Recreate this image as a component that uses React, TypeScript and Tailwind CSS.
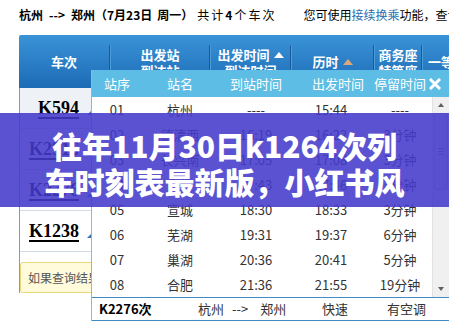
const trains = ["K594", "K2916", "K2276", "K1238"];

const stops = [
  ["01", "杭州", "----", "15:44", "----"],
  ["02", "德清西", "16:19", "16:22", "3分钟"],
  ["03", "长兴南", "17:05", "17:08", "3分钟"],
  ["04", "广德", "17:43", "17:46", "3分钟"],
  ["05", "宣城", "18:30", "18:33", "3分钟"],
  ["06", "芜湖", "19:31", "19:37", "6分钟"],
  ["07", "巢湖", "20:36", "20:41", "5分钟"],
  ["08", "合肥", "21:36", "21:55", "19分钟"],
];

function Divider() {
  return <div className="h-[34px] w-[2px] shrink-0 border-l border-r border-l-[#1a5a97] border-r-[#4d9bd8]" />;
}

function SortArrow({ tone }: { tone: string }) {
  return <span className={`ml-[4px] inline-block h-0 w-0 border-x-[5px] border-b-[6px] border-x-transparent ${tone}`} />;
}

export default function App() {
  return (
    <div className="relative h-[325px] w-[449px] overflow-hidden bg-white font-['Noto_Sans_CJK_SC','Liberation_Sans',sans-serif] text-[#333]">
      {/* route summary */}
      <div className="flex h-[30px] items-center whitespace-nowrap pl-[19px] text-[12px] text-black">
        <span className="font-bold">
          杭州<span className="mx-[6px]">--&gt;</span>郑州（7月23日<span className="ml-[5px]">周一</span>）
        </span>
        <span className="ml-[4px] tracking-[2px]">
          共计<b>4</b>个车次
        </span>
        <span className="ml-[27px]">
          您可使用<span className="text-[#1f6fb2]">接续换乘</span>功能，查询途中换乘一次的部分列车余票情况。
        </span>
      </div>

      {/* result table header */}
      <div className="ml-[19px] mt-[5px] flex h-[53px] w-[480px] items-center rounded-t-[2px] bg-gradient-to-b from-[#3a93d7] to-[#1c6bb5] text-[13px] font-bold leading-[16px] text-white">
        <div className="flex w-[90px] justify-center">车次</div>
        <Divider />
        <div className="flex w-[98px] flex-col items-center pt-[3px]">
          <span>出发站</span>
          <span>到达站</span>
        </div>
        <Divider />
        <div className="flex w-[79px] flex-col items-center pt-[3px]">
          <span className="flex items-center">
            出发时间
            <SortArrow tone="border-b-white" />
          </span>
          <span>到达时间</span>
        </div>
        <Divider />
        <div className="flex w-[81px] items-center justify-center">
          历时
          <SortArrow tone="border-b-[#d9a77a]" />
        </div>
        <Divider />
        <div className="flex w-[46px] flex-col items-center pt-[3px]">
          <span>商务座</span>
          <span>特等座</span>
        </div>
        <Divider />
        <div className="pl-[5px]">一等座</div>
      </div>

      {/* train number column */}
      <div className="ml-[19px] w-[91px] border-l border-[#7b9cbd]">
        {trains.map((t, i) => (
          <div
            key={t}
            className={`flex h-[41px] items-center justify-end border-b border-[#d3dce6] pr-[19px] ${i === 0 ? "bg-[#eef2f7]" : ""}`}
          >
            <span className="font-['Liberation_Serif',serif] text-[18px] font-bold text-black underline decoration-2 underline-offset-[3px]">
              {t}
            </span>
            <span className="ml-[8px] mt-[10px] h-0 w-0 border-b-[4px] border-l-[4px] border-b-[#3a6fb0] border-l-transparent" />
          </div>
        ))}
        <div className="pt-[10px]">
          <div className="flex h-[31px] items-center whitespace-nowrap rounded-[3px] border border-[#ecd77a] bg-[#fffbdb] pl-[7px] text-[12px] text-[#555]">
            如果查询结果中没有满足条件的车次
          </div>
        </div>
      </div>

      {/* stop list popup */}
      <div className="absolute left-[91px] top-[70px] w-[358px] border-l border-[#8fb6d6] bg-white">
        <div className="grid h-[27px] grid-cols-[50px_76px_76px_74px_64px_1fr] items-center bg-[#5dbde5] text-center text-[13px] text-white">
          <span>站序</span>
          <span>站名</span>
          <span>到站时间</span>
          <span className="pl-[14px]">出发时间</span>
          <span>停留时间</span>
          <span className="-translate-x-[6px] flex justify-center">
            <svg width="12" height="12" viewBox="0 0 12 12">
              <path d="M2 2 10 10M10 2 2 10" stroke="white" strokeWidth="3" strokeLinecap="square" />
            </svg>
          </span>
        </div>
        <div className="flex h-[200px]">
          <div className="w-[340px]">
            {stops.map((s) => (
              <div key={s[0]} className="grid h-[25px] grid-cols-[50px_76px_76px_74px_64px] items-center text-center text-[13px] text-[#333]">
                {s.map((c, j) => (
                  <span key={j}>{c}</span>
                ))}
              </div>
            ))}
          </div>
          <div className="flex w-[17px] flex-col items-center border-l border-[#e2e2e2] bg-[#f0f0f0]">
            <div className="flex h-[16px] items-center">
              <span className="h-0 w-0 border-x-[3px] border-b-[4px] border-x-transparent border-b-[#606060]" />
            </div>
            <div className="flex h-[77px] w-[14px] items-center justify-center rounded-[2px] border border-[#bcbcbc] bg-gradient-to-r from-[#f6f6f6] to-[#dcdcdc]">
              <div className="flex w-[6px] flex-col gap-[2px]">
                <span className="h-px bg-[#8a8a8a]" />
                <span className="h-px bg-[#8a8a8a]" />
                <span className="h-px bg-[#8a8a8a]" />
              </div>
            </div>
            <div className="flex-1" />
            <div className="flex h-[16px] items-center">
              <span className="h-0 w-0 border-x-[3px] border-t-[4px] border-x-transparent border-t-[#606060]" />
            </div>
          </div>
        </div>
        <div className="flex h-[24px] items-center whitespace-nowrap border-y border-[#3f8cc4] text-[13px] text-[#333]">
          <span className="w-[99px] pl-[7px] font-bold text-black">K2276次</span>
          <span className="w-[40px] pl-[7px]">杭州</span>
          <span className="w-[86px] pl-[1px]">
            --&gt;<span className="ml-[12px]">郑州</span>
          </span>
          <span className="w-[65px] pl-[5px]">快速</span>
          <span className="pl-[5px]">有空调</span>
        </div>
      </div>

      {/* headline band */}
      <div className="absolute left-0 top-[113px] flex h-[94px] w-full flex-col items-center justify-center bg-[rgba(68,58,204,0.88)] pt-[6px] text-[30px] font-black leading-[36px] text-white">
        <div className="whitespace-nowrap">往年11月30日k1264次列</div>
        <div className="whitespace-nowrap">车时刻表最新版，小红书风</div>
      </div>
    </div>
  );
}
